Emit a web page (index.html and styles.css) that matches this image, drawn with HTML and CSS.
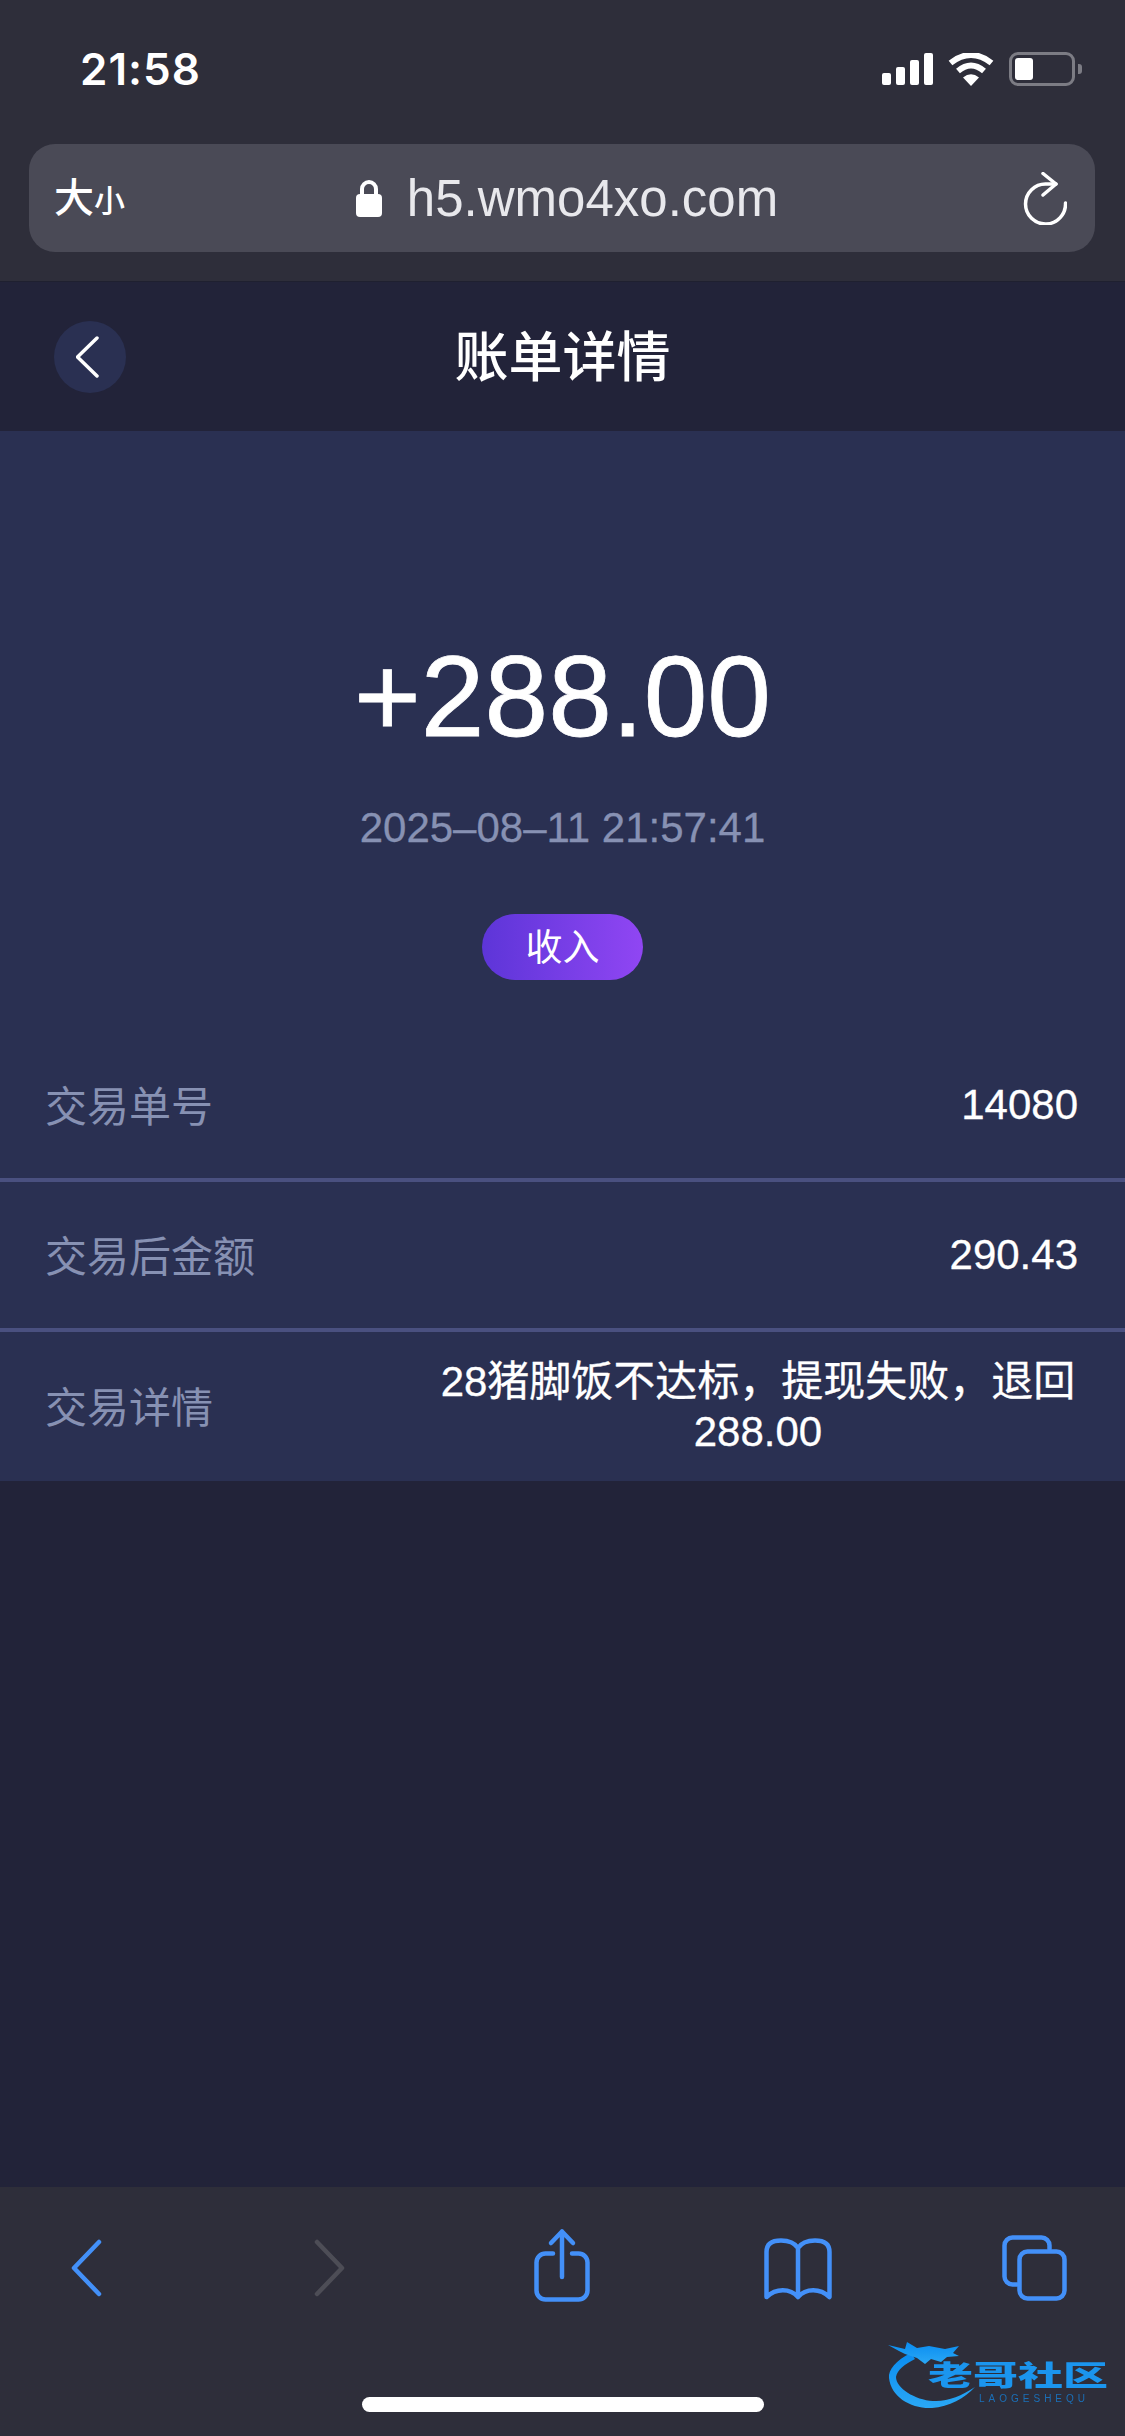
FILE: index.html
```html
<!DOCTYPE html>
<html>
<head>
  <meta charset="utf-8" />
  <title>账单详情</title>
  <meta name="viewport" content="width=device-width, initial-scale=1">
  <link rel="stylesheet" href="styles.css">
</head>
<body>
  <div class="browser-top">
    <div class="status-bar">
      <span class="time">21:58</span>
      <div class="status-icons">
        <div class="signal"><i class="b1"></i><i class="b2"></i><i class="b3"></i><i class="b4"></i></div>
        <svg class="wifi" width="46" height="33" viewBox="0 0 46 33">
          <path d="M2.5 10 Q23 -6 43.5 10" fill="none" stroke="#fff" stroke-width="6" />
          <path d="M10 18 Q23 7 36 18" fill="none" stroke="#fff" stroke-width="6" />
          <path d="M23 33 L15 24.5 Q23 18 31 24.5 Z" fill="#fff" />
        </svg>
        <div class="battery"><div class="battery-level"></div></div>
        <div class="battery-nub"></div>
      </div>
    </div>
    <div class="url-bar">
      <span class="text-size">大<small>小</small></span>
      <div class="url">
        <svg width="26" height="38" viewBox="0 0 26 38">
          <path d="M6 17 V10 a7 7 0 0 1 14 0 V17" fill="none" stroke="#fff" stroke-width="4" />
          <rect x="0" y="15" width="26" height="23" rx="4" fill="#fff" />
        </svg>
        <span>h5.wmo4xo.com</span>
      </div>
      <svg class="reload" width="45" height="53" viewBox="0 0 45 53">
        <path d="M34 12 H24 A20 20 0 1 0 43.5 31" fill="none" stroke="#fff" stroke-width="3.5" stroke-linecap="round" />
        <path d="M21 1.5 L34 12 L21 23" fill="none" stroke="#fff" stroke-width="3.5" stroke-linecap="round" stroke-linejoin="round" />
      </svg>
    </div>
  </div>

  <div class="nav">
    <div class="nav-back">
      <svg width="26" height="42" viewBox="0 0 26 42">
        <path d="M21 2 L1.5 21 L21 40" fill="none" stroke="#fff" stroke-width="3.5" stroke-linecap="round" stroke-linejoin="round" />
      </svg>
    </div>
    <h1>账单详情</h1>
  </div>

  <div class="panel">
    <div class="summary">
      <div class="amount">+288.00</div>
      <div class="date">2025–08–11 21:57:41</div>
      <div class="tag">收入</div>
    </div>
    <div class="row">
      <span class="label">交易单号</span>
      <span class="value">14080</span>
    </div>
    <div class="row">
      <span class="label">交易后金额</span>
      <span class="value">290.43</span>
    </div>
    <div class="row">
      <span class="label">交易详情</span>
      <span class="value">28猪脚饭不达标，提现失败，退回288.00</span>
    </div>
  </div>

  <div class="filler"></div>

  <div class="toolbar">
    <svg viewBox="0 0 100 80">
      <path class="tool" d="M63 15 L38 41 L63 67" />
    </svg>
    <svg viewBox="0 0 100 80">
      <path class="tool off" d="M44 15 L69 41 L44 67" />
    </svg>
    <svg viewBox="0 0 100 80">
      <path class="tool" d="M43 26.5 H35.5 a9 9 0 0 0 -9 9 V63.5 a9 9 0 0 0 9 9 H68.5 a9 9 0 0 0 9 -9 V35.5 a9 9 0 0 0 -9 -9 H62" />
      <path class="tool" d="M41 16 L52 4.5 L63 16 M52 4.5 V50" />
    </svg>
    <svg viewBox="0 0 100 80">
      <path class="tool" d="M51 21 C47 15 40 13.5 34 13.5 C25 13.5 19.5 17 19.5 25 V70 C29 61 43 61 51 70 C59 61 73 61 82.5 70 V25 C82.5 17 77 13.5 68 13.5 C62 13.5 55 15 51 21 V70" />
    </svg>
    <svg viewBox="0 0 100 80">
      <path class="tool" d="M65.5 22 V18.5 a8 8 0 0 0 -8 -8 H28.5 a8 8 0 0 0 -8 8 V49.5 a8 8 0 0 0 8 8 H33" />
      <rect class="tool" x="35.5" y="24.5" width="45" height="47" rx="8" />
    </svg>
  </div>

  <div class="home-indicator"></div>

  <div class="watermark">
    <svg width="100" height="70" viewBox="0 0 100 70">
      <defs>
        <linearGradient id="wm" x1="0" y1="0" x2="0" y2="1">
          <stop offset="0" stop-color="#0a8cf0" />
          <stop offset="1" stop-color="#2aa8f5" />
        </linearGradient>
      </defs>
      <path d="M24 13 C9 20 1 30 2 38 C4 57 24 69 45 68 C62 67 78 58 88 47 C74 56 60 62 46 61 C28 60 9 48 9 37 C10 30 18 24 28 19 Z" fill="url(#wm)" />
      <path d="M1 5 L18 9 L20 2 L30 8 L42 6 L58 9 L72 6 L66 13 L72 16 L60 17 L54 22 L44 19 L38 24 L30 18 L18 14 L12 11 Z" fill="url(#wm)" />
    </svg>
    <div class="wm-name">老哥社区</div>
    <div class="wm-sub">LAOGESHEQU</div>
  </div>
</body>
</html>
```
FILE: styles.css
```css
* { margin: 0; padding: 0; box-sizing: border-box; }
html, body { width: 1125px; height: 2436px; overflow: hidden; }
body { position: relative; display: flex; flex-direction: column; background: #222339; color: #fff; font-family: 'Liberation Sans', 'Noto Sans CJK SC', sans-serif; }

.browser-top { height: 282px; padding-top: 44px; background: #2e2e3a; border-bottom: 1px solid #1f2030; }
.status-bar { display: flex; justify-content: space-between; align-items: center; height: 50px; padding: 0 43px 0 80px; }
.time { font-family: Inter, 'Liberation Sans', sans-serif; font-size: 44px; font-weight: 600; letter-spacing: 1px; }
.status-icons { display: flex; align-items: center; }
.signal { display: flex; align-items: flex-end; gap: 5px; height: 32px; margin-right: 15px; }
.signal i { display: block; width: 9px; background: #fff; border-radius: 2px; }
.b1 { height: 12px; }
.b2 { height: 18px; }
.b3 { height: 25px; }
.b4 { height: 32px; }
.battery { width: 66px; height: 34px; margin-left: 15px; padding: 3px; border: 3px solid #7c7c84; border-radius: 9px; }
.battery-level { width: 18px; height: 22px; background: #fff; border-radius: 3px; }
.battery-nub { width: 4px; height: 10px; margin-left: 3px; background: #7c7c84; border-radius: 0 3px 3px 0; }

.url-bar { display: flex; align-items: center; justify-content: space-between; height: 108px; margin: 50px 30px 0 29px; padding: 0 28px 0 25px; background: #4a4a56; border-radius: 26px; }
.text-size { width: 58px; font-size: 40px; font-weight: 500; line-height: 1; white-space: nowrap; }
.text-size small { font-size: 31px; }
.url { display: flex; align-items: center; gap: 25px; font-size: 51px; color: #e8e8ec; }

.nav { display: flex; align-items: center; justify-content: center; position: relative; height: 149px; background: #222339; }
.nav h1 { margin-top: 2px; font-size: 54px; font-weight: 500; line-height: 1; }
.nav-back { position: absolute; left: 54px; top: 39px; display: flex; align-items: center; justify-content: center; width: 72px; height: 72px; padding-right: 3px; background: #2a3052; border-radius: 50%; }

.panel { background: #2a3052; }
.summary { display: flex; flex-direction: column; align-items: center; height: 601px; padding-top: 201px; }
.amount { font-size: 114.5px; line-height: 128px; -webkit-text-stroke: 0.8px #fff; }
.date { margin-top: 44px; font-size: 42px; line-height: 48px; color: #8791b3; -webkit-text-stroke: 0.3px #8791b3; }
.tag { display: flex; align-items: center; justify-content: center; width: 161px; height: 66px; margin-top: 62px; padding-bottom: 4px; font-size: 37px; background: linear-gradient(90deg, #5d35d8, #9046f3); border-radius: 33px; }

.row { display: flex; align-items: center; justify-content: space-between; height: 150px; padding: 0 47px 0 45px; font-size: 42px; border-bottom: 4px solid #4a5080; }
.row:last-child { border-bottom: none; height: 149px; }
.label { padding-bottom: 4px; color: #8791b3; }
.value { max-width: 640px; line-height: 50px; text-align: center; -webkit-text-stroke: 0.3px #fff; }

.filler { flex: 1; }

.toolbar { display: grid; grid-template-columns: repeat(5, 100px); column-gap: 137px; height: 249px; padding: 40px 0 0 36px; background: #2e2e3a; }
.toolbar svg { width: 100px; height: 80px; }
.tool { fill: none; stroke: #4390f8; stroke-width: 4.5; stroke-linecap: round; stroke-linejoin: round; }
.tool.off { stroke: #4d4d56; }

.home-indicator { position: absolute; left: 362px; top: 2397px; width: 402px; height: 15px; background: #fff; border-radius: 8px; }

.watermark { position: absolute; left: 887px; top: 2340px; width: 225px; height: 70px; filter: blur(0.5px); }
.wm-name { position: absolute; left: 41px; top: 14px; width: 180px; font-size: 45px; font-weight: 900; line-height: 45px; white-space: nowrap; transform: scaleY(0.62); color: #1b95ee; }
.wm-sub { position: absolute; left: 92px; top: 53px; font-size: 10px; letter-spacing: 4px; white-space: nowrap; color: #1a6fb8; }
```
